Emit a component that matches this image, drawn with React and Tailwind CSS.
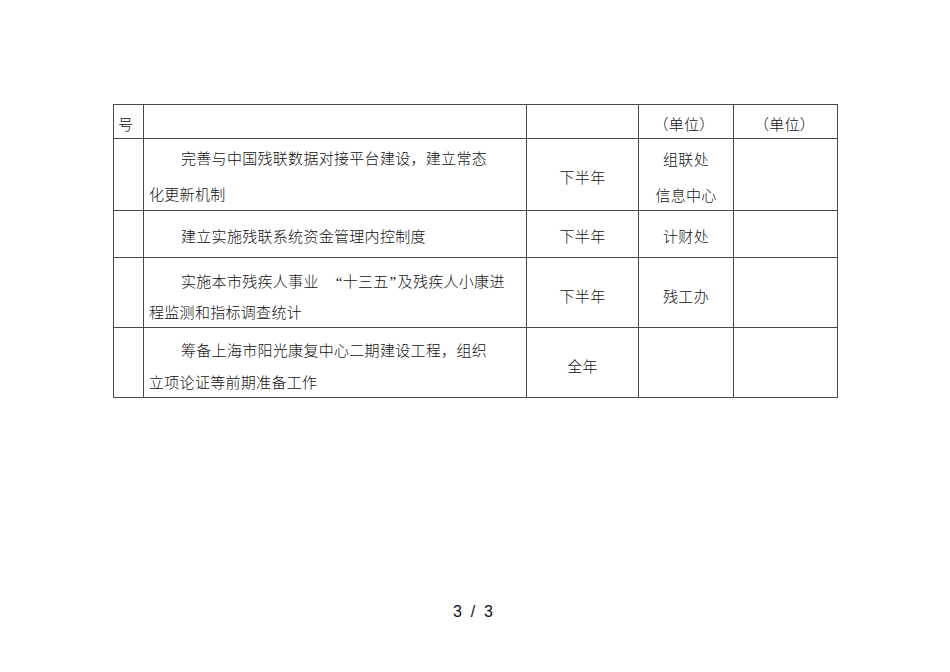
import React from "react";

const font = { fontFamily: '"Noto Sans CJK SC", "Noto Sans", sans-serif' };
const latin = { fontFamily: '"Liberation Serif", serif' };

export default function App() {
  const td = "border border-[#4a4a4a] p-0 align-top";
  return (
    <div className="w-[950px] h-[672px] bg-white text-[#111]" style={font}>
      <div className="pt-[104px] pl-[113px]">
        <table className="table-fixed border-collapse w-[724px] text-[15px] tracking-[0.3px] font-light">
          <colgroup>
            <col className="w-[30px]" />
            <col className="w-[383px]" />
            <col className="w-[112px]" />
            <col className="w-[95px]" />
            <col className="w-[104px]" />
          </colgroup>
          <tbody>
            <tr>
              <td className={td}>
                <div className="h-[33px] pl-[4px] pt-[4px] leading-[30px]">号</div>
              </td>
              <td className={td}><div className="h-[33px]" /></td>
              <td className={td}><div className="h-[33px]" /></td>
              <td className={td}>
                <div className="h-[33px] pt-[4px] leading-[30px] text-center pr-[4px]">（单位）</div>
              </td>
              <td className={td}>
                <div className="h-[33px] pt-[4px] leading-[30px] text-center pr-[2px]">（单位）</div>
              </td>
            </tr>
            <tr>
              <td className={td}><div className="h-[71px]" /></td>
              <td className={td}>
                <div className="h-[71px] pt-[1px] pl-[5px] leading-[36px] whitespace-nowrap">
                  <span className="pl-[32px]">完善与中国残联数据对接平台建设，建立常态</span>
                  <br />
                  化更新机制
                </div>
              </td>
              <td className={td}>
                <div className="h-[71px] pt-[4px] leading-[67px] text-center">下半年</div>
              </td>
              <td className={td}>
                <div className="h-[71px] pt-[2px] leading-[36px] text-center">
                  组联处
                  <br />
                  信息中心
                </div>
              </td>
              <td className={td}><div className="h-[71px]" /></td>
            </tr>
            <tr>
              <td className={td}><div className="h-[46px]" /></td>
              <td className={td}>
                <div className="h-[46px] pt-[7px] pl-[37px] leading-[36px] whitespace-nowrap">
                  建立实施残联系统资金管理内控制度
                </div>
              </td>
              <td className={td}>
                <div className="h-[46px] pt-[7px] leading-[36px] text-center">下半年</div>
              </td>
              <td className={td}>
                <div className="h-[46px] pt-[7px] leading-[36px] text-center">计财处</div>
              </td>
              <td className={td}><div className="h-[46px]" /></td>
            </tr>
            <tr>
              <td className={td}><div className="h-[69px]" /></td>
              <td className={td}>
                <div className="h-[69px] pt-[8px] pl-[5px] leading-[30px] whitespace-nowrap">
                  <span className="pl-[32px]">实施本市残疾人事业</span>
                  <span className="inline-block w-[17px]" />
                  <span style={latin} className="inline-block w-[7px] tracking-normal">“</span>
                  <span>十三五</span>
                  <span style={latin} className="inline-block w-[8px] ml-[1px] tracking-normal">”</span>
                  <span>及残疾人小康进</span>
                  <br />
                  程监测和指标调查统计
                </div>
              </td>
              <td className={td}>
                <div className="h-[69px] pt-[6px] leading-[63px] text-center">下半年</div>
              </td>
              <td className={td}>
                <div className="h-[69px] pt-[6px] leading-[63px] text-center">残工办</div>
              </td>
              <td className={td}><div className="h-[69px]" /></td>
            </tr>
            <tr>
              <td className={td}><div className="h-[69px]" /></td>
              <td className={td}>
                <div className="h-[69px] pt-[6px] pl-[5px] leading-[32px] whitespace-nowrap">
                  <span className="pl-[32px]">筹备上海市阳光康复中心二期建设工程，组织</span>
                  <br />
                  立项论证等前期准备工作
                </div>
              </td>
              <td className={td}>
                <div className="h-[69px] pt-[6px] leading-[63px] text-center">全年</div>
              </td>
              <td className={td}><div className="h-[69px]" /></td>
              <td className={td}><div className="h-[69px]" /></td>
            </tr>
          </tbody>
        </table>
      </div>
      <div
        className="mt-[204px] w-full text-center text-[16px] leading-[20px] pr-[4px] whitespace-pre"
        style={{ fontFamily: '"Liberation Sans", Arial, sans-serif' }}
      >
        {"3  /  3"}
      </div>
    </div>
  );
}
